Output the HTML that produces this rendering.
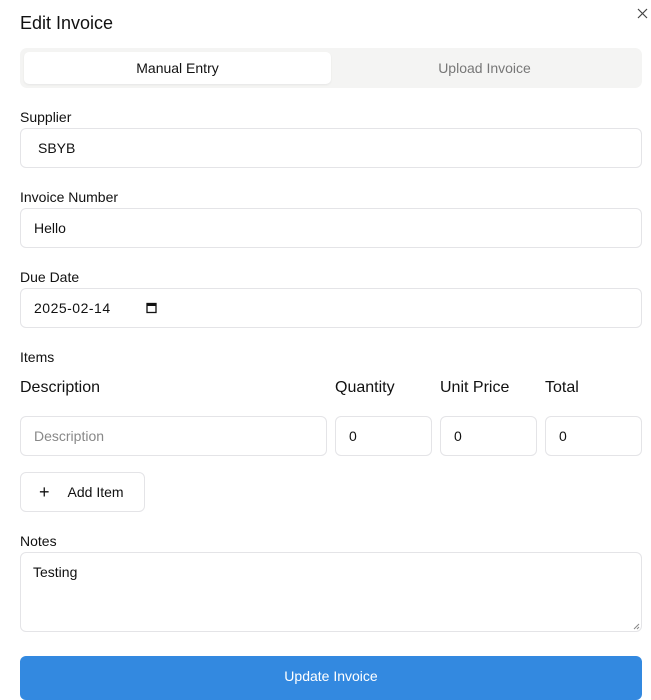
<!DOCTYPE html>
<html><head><style>
*{box-sizing:border-box;margin:0;padding:0}
body{width:651px;height:683px;overflow:hidden;background:#fff;font-family:"Liberation Sans",sans-serif;color:#111;position:relative}
.a{position:absolute}
.lbl{font-size:14px;line-height:16px;color:#111}
.in{border:1px solid #e4e4e7;border-radius:6px;height:40px;font-size:14px;padding-left:13px;line-height:38px;background:#fff}
.h{font-size:16px;line-height:18px}
</style></head><body>
<div class="a" style="left:20px;top:12px;font-size:18px;font-weight:500;line-height:22px">Edit Invoice</div>
<svg class="a" style="left:637px;top:8px" width="11" height="11" viewBox="0 0 11 11"><path d="M1 1L10 10M10 1L1 10" stroke="#444" stroke-width="1.2"/></svg>
<div class="a" style="left:20px;top:48px;width:622px;height:40px;background:#f4f4f3;border-radius:7px"></div>
<div class="a" style="left:24px;top:52px;width:307px;height:32px;background:#fff;border-radius:5px;box-shadow:0 1px 2px rgba(0,0,0,.06);text-align:center;line-height:32px;font-size:14px">Manual Entry</div>
<div class="a" style="left:331px;top:52px;width:307px;height:32px;text-align:center;line-height:32px;font-size:14px;color:#777">Upload Invoice</div>
<div class="a lbl" style="left:20px;top:109px">Supplier</div>
<div class="a in" style="left:20px;top:128px;width:622px;padding-left:17px">SBYB</div>
<div class="a lbl" style="left:20px;top:189px">Invoice Number</div>
<div class="a in" style="left:20px;top:208px;width:622px">Hello</div>
<div class="a lbl" style="left:20px;top:269px">Due Date</div>
<div class="a in" style="left:20px;top:288px;width:622px;letter-spacing:.5px">2025-02-14</div>
<svg class="a" style="left:146px;top:302px" width="11" height="12" viewBox="0 0 11 12"><rect x="1" y="1.5" width="9" height="9" fill="none" stroke="#111" stroke-width="1.3"/><rect x="1" y="1.5" width="9" height="2.5" fill="#111"/></svg>
<div class="a lbl" style="left:20px;top:349px">Items</div>
<div class="a h" style="left:20px;top:379px">Description</div>
<div class="a h" style="left:335px;top:379px">Quantity</div>
<div class="a h" style="left:440px;top:379px">Unit Price</div>
<div class="a h" style="left:545px;top:379px">Total</div>
<div class="a in" style="left:20px;top:416px;width:307px;color:#888">Description</div>
<div class="a in" style="left:335px;top:416px;width:97px">0</div>
<div class="a in" style="left:440px;top:416px;width:97px">0</div>
<div class="a in" style="left:545px;top:416px;width:97px">0</div>
<div class="a in" style="left:20px;top:472px;width:125px;padding-left:18px"><span style="font-size:18px;vertical-align:-1px">+</span><span style="margin-left:18px">Add Item</span></div>
<div class="a lbl" style="left:20px;top:533px">Notes</div>
<div class="a" style="left:20px;top:552px;width:622px;height:80px;border:1px solid #e4e4e7;border-radius:6px;font-size:14px;padding:11px 12px">Testing</div>
<svg class="a" style="left:633px;top:623px" width="7" height="7"><path d="M1 6L6 1M4 6L6 4" stroke="#888" stroke-width="1"/></svg>
<div class="a" style="left:20px;top:656px;width:622px;height:44px;background:#3389e0;border-radius:6px;color:#fff;text-align:center;font-size:14px;line-height:40px">Update Invoice</div>
</body></html>
